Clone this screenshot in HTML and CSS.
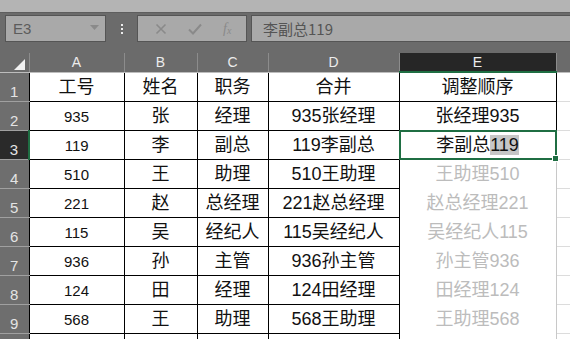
FILE: index.html
```html
<!doctype html>
<html>
<head>
<meta charset="utf-8">
<title>调整顺序</title>
<link rel="stylesheet" href="styles.css">
</head>
<body>
<div class="top-band"></div>
<div class="formula-bar">
  <div class="name-box">
    <span>E3</span>
    <svg class="drop" width="9" height="5" viewBox="0 0 9 5"><path d="M0 0h9L4.5 5z" fill="#8a8a8a"/></svg>
  </div>
  <div class="dots"><i></i><i></i><i></i></div>
  <div class="fx-box">
    <svg width="12" height="12" viewBox="0 0 12 12"><path d="M1.5 1.5l9 9M10.5 1.5l-9 9" stroke="#8a8a8a" stroke-width="1.6"/></svg>
    <svg width="14" height="12" viewBox="0 0 14 12"><path d="M1 6.5l4 4L13 1.5" stroke="#8a8a8a" stroke-width="2" fill="none"/></svg>
    <span class="fx">f<sub>x</sub></span>
  </div>
  <div class="input-box">李副总119</div>
</div>

<table class="sheet">
  <colgroup>
    <col style="width:29px"><col style="width:95px"><col style="width:73px"><col style="width:71px"><col style="width:131px"><col style="width:157px"><col>
  </colgroup>
  <tr class="col-head">
    <th class="corner"><span class="tri"></span></th>
    <th>A</th><th>B</th><th>C</th><th>D</th><th class="cur">E</th><th class="last"></th>
  </tr>
  <tr>
    <th class="rh">1</th>
    <td class="cjk">工号</td><td class="cjk">姓名</td><td class="cjk">职务</td><td class="cjk">合并</td><td class="cjk e-cell">调整顺序</td><td class="f"></td>
  </tr>
  <tr>
    <th class="rh">2</th>
    <td class="num">935</td><td class="cjk">张</td><td class="cjk">经理</td><td class="cjk">935张经理</td><td class="cjk e-cell">张经理935</td><td class="f"></td>
  </tr>
  <tr>
    <th class="rh cur">3</th>
    <td class="num">119</td><td class="cjk">李</td><td class="cjk">副总</td><td class="cjk">119李副总</td><td class="cjk e-cell sel">李副总<span class="hl">119</span><span class="handle"></span></td><td class="f"></td>
  </tr>
  <tr>
    <th class="rh">4</th>
    <td class="num">510</td><td class="cjk">王</td><td class="cjk">助理</td><td class="cjk">510王助理</td><td class="cjk ghost">王助理510</td><td class="f"></td>
  </tr>
  <tr>
    <th class="rh">5</th>
    <td class="num">221</td><td class="cjk">赵</td><td class="cjk">总经理</td><td class="cjk">221赵总经理</td><td class="cjk ghost">赵总经理221</td><td class="f"></td>
  </tr>
  <tr>
    <th class="rh">6</th>
    <td class="num">115</td><td class="cjk">吴</td><td class="cjk">经纪人</td><td class="cjk">115吴经纪人</td><td class="cjk ghost">吴经纪人115</td><td class="f"></td>
  </tr>
  <tr>
    <th class="rh">7</th>
    <td class="num">936</td><td class="cjk">孙</td><td class="cjk">主管</td><td class="cjk">936孙主管</td><td class="cjk ghost">孙主管936</td><td class="f"></td>
  </tr>
  <tr>
    <th class="rh">8</th>
    <td class="num">124</td><td class="cjk">田</td><td class="cjk">经理</td><td class="cjk">124田经理</td><td class="cjk ghost">田经理124</td><td class="f"></td>
  </tr>
  <tr>
    <th class="rh">9</th>
    <td class="num">568</td><td class="cjk">王</td><td class="cjk">助理</td><td class="cjk">568王助理</td><td class="cjk ghost">王助理568</td><td class="f"></td>
  </tr>
  <tr>
    <th class="rh"></th>
    <td></td><td></td><td></td><td></td><td class="ghost"></td><td class="f"></td>
  </tr>
</table>
</body>
</html>
```

FILE: styles.css
```css
body{
margin:0;
background:#6b6b6b;
font-family:"Liberation Sans","Noto Sans CJK SC",sans-serif;
overflow:hidden;
width:570px;
height:339px;
}
.top-band{
height:12px;
background:#b4b4b4;
border-bottom:1px solid #5e5e5e;
}
.formula-bar{
display:flex;
height:40px;
padding:2px 0 0 5px;
box-sizing:border-box;
align-items:flex-start;
}
.name-box,.fx-box,.input-box{
height:27px;
box-sizing:border-box;
background:#a9a9a9;
border:1px solid #555;
}
.name-box{
width:101px;
display:flex;
align-items:center;
justify-content:space-between;
padding:0 6px 0 7px;
font-size:15px;
color:#5c5c5c;
}
.drop{
margin-top:-2px;
}
.dots{
width:31px;
height:27px;
display:flex;
flex-direction:column;
align-items:center;
justify-content:center;
gap:2px;
}
.dots i{
width:2px;
height:2px;
background:#ececec;
}
.fx-box{
width:110px;
display:flex;
align-items:center;
justify-content:space-around;
padding:0 4px 0 6px;
}
.fx{
font-family:"Liberation Serif",serif;
font-style:italic;
font-size:14px;
color:#8a8a8a;
}
.fx sub{
font-size:10px;
vertical-align:-1px;
}
.input-box{
flex:1;
margin-left:4px;
border-right:none;
padding:3px 0 0 11px;
font-family:"Noto Sans CJK SC",sans-serif;
font-size:15px;
line-height:19px;
color:#555;
}
.sheet{
border-collapse:collapse;
table-layout:fixed;
width:570px;
}
.col-head th{
height:18px;
padding:0;
background:#6b6b6b;
color:#ececec;
font-weight:normal;
font-size:14px;
line-height:18px;
border-left:1px solid #8c8c8c;
border-bottom:1px solid #bdbdbd;
}
.col-head .corner{
border-left:none;
position:relative;
}
.tri{
position:absolute;
right:4px;
bottom:2px;
width:0;
height:0;
border-left:11px solid transparent;
border-bottom:11px solid #f2f2f2;
}
.col-head .cur{
background:#262626;
border-bottom:2px solid #1f6e43;
}
.col-head .last{
border-left:1px solid #8c8c8c;
}
.rh{
height:28px;
padding:0;
background:#6e6e6e;
color:#e4e4e4;
font-weight:normal;
font-size:15px;
vertical-align:bottom;
line-height:18px;
text-align:center;
border-bottom:1px solid #a0a0a0;
border-right:1px solid #000;
}
.rh.cur{
background:#2a2a2a;
border-right:2px solid #1f6e43;
}
td{
background:#fff;
padding:0 0 3px 0;
text-align:center;
vertical-align:bottom;
border:1px solid #000;
color:#111;
white-space:nowrap;
overflow:visible;
}
.cjk{
font-family:"Liberation Sans","Noto Sans CJK SC",sans-serif;
font-size:18px;
line-height:22px;
}
.num{
font-size:15px;
line-height:19px;
padding-bottom:4px;
}
.e-cell{
border-right:1px solid #000;
}
.sel{
position:relative;
}
.sel::after{
content:"";
position:absolute;
left:-1px;
top:-1px;
right:-1px;
bottom:-1px;
border:2px solid #1f6e43;
}
.handle{
position:absolute;
right:-3px;
bottom:-3px;
width:5px;
height:5px;
background:#1f6e43;
border:1px solid #fff;
z-index:2;
}
.hl{
background:#c6c6c6;
}
.ghost{
color:#bcbcbc;
border-top:none;
border-bottom:none;
border-left:1px solid #d4d4d4;
border-right:1px solid #c8c8c8;
}
.f{
border:none;
border-bottom:1px solid #dcdcdc;
border-left:1px solid #c8c8c8;
}
```
